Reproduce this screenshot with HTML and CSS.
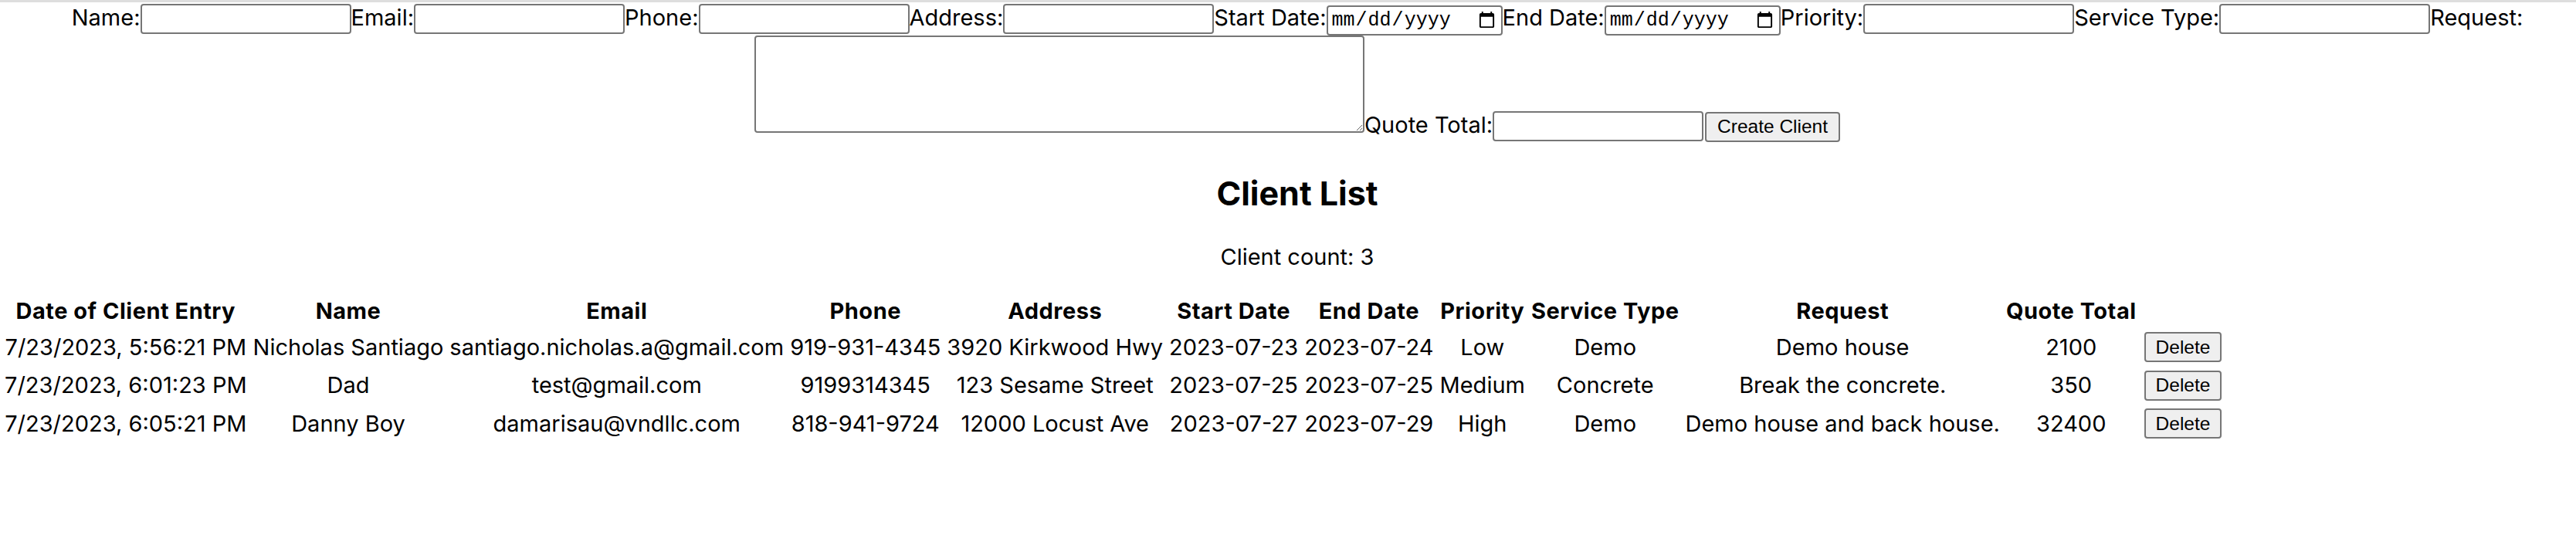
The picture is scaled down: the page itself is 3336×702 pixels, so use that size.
FILE: index.html
```html
<!DOCTYPE html>
<html lang="en">
<head>
<meta charset="utf-8">
<title>Client List</title>
<link rel="stylesheet" href="styles.css">
</head>
<body>
<div class="app">
  <form class="client-form"><label class="field-label">Name:</label><input class="text-input" type="text"><label class="field-label">Email:</label><input class="text-input" type="text"><label class="field-label">Phone:</label><input class="text-input" type="text"><label class="field-label">Address:</label><input class="text-input" type="text"><label class="field-label">Start Date:</label><input class="date-input" type="date"><label class="field-label">End Date:</label><input class="date-input" type="date"><label class="field-label">Priority:</label><input class="text-input" type="text"><label class="field-label">Service Type:</label><input class="text-input" type="text"><label class="field-label">Request:</label><textarea class="request-input"></textarea><label class="field-label">Quote Total:</label><input class="text-input" type="text"><button class="btn create-btn" type="button">Create Client</button></form>
  <h2 class="title">Client List</h2>
  <p class="count">Client count: 3</p>
  <table class="clients">
    <thead>
      <tr>
        <th>Date of Client Entry</th><th>Name</th><th>Email</th><th>Phone</th><th>Address</th><th>Start Date</th><th>End Date</th><th>Priority</th><th>Service Type</th><th>Request</th><th>Quote Total</th><th></th>
      </tr>
    </thead>
    <tbody>
      <tr>
        <td>7/23/2023, 5:56:21 PM</td><td>Nicholas Santiago</td><td>santiago.nicholas.a@gmail.com</td><td>919-931-4345</td><td>3920 Kirkwood Hwy</td><td>2023-07-23</td><td>2023-07-24</td><td>Low</td><td>Demo</td><td>Demo house</td><td>2100</td><td class="action"><button class="btn delete-btn" type="button">Delete</button></td>
      </tr>
      <tr>
        <td>7/23/2023, 6:01:23 PM</td><td>Dad</td><td>test@gmail.com</td><td>9199314345</td><td>123 Sesame Street</td><td>2023-07-25</td><td>2023-07-25</td><td>Medium</td><td>Concrete</td><td>Break the concrete.</td><td>350</td><td class="action"><button class="btn delete-btn" type="button">Delete</button></td>
      </tr>
      <tr>
        <td>7/23/2023, 6:05:21 PM</td><td>Danny Boy</td><td>damarisau@vndllc.com</td><td>818-941-9724</td><td>12000 Locust Ave</td><td>2023-07-27</td><td>2023-07-29</td><td>High</td><td>Demo</td><td>Demo house and back house.</td><td>32400</td><td class="action"><button class="btn delete-btn" type="button">Delete</button></td>
      </tr>
    </tbody>
  </table>
</div>
</body>
</html>
```

FILE: styles.css
```css
html, body {
  margin: 0;
  padding: 0;
  background: #ffffff;
}

body {
  border-top: 3px solid #dedede;
  font-family: Inter, "Noto Sans", sans-serif;
  font-size: 29px;
  color: #000000;
}

.app {
  text-align: center;
}

.client-form {
  margin: 0;
  padding: 2px 0 0 24px;
  line-height: 1.21;
}

.field-label {
  font-family: Inter, "Noto Sans", sans-serif;
  font-size: 29px;
  color: #000;
}

.text-input,
.date-input,
.request-input {
  box-sizing: border-box;
  margin: 0;
  border: 2px solid #767676;
  border-radius: 4px;
  background: #fff;
  vertical-align: baseline;
}

.text-input {
  width: 273px;
  height: 39px;
  padding: 2px 4px;
  font-family: "Liberation Sans", Arial, sans-serif;
  font-size: 25px;
}

.date-input {
  width: 228px;
  height: 39px;
  padding: 2px 4px;
  font-family: "Liberation Mono", monospace;
  font-size: 25px;
  color: #000;
}

.request-input {
  width: 790px;
  height: 126px;
  padding: 4px;
  font-family: "Liberation Mono", monospace;
  font-size: 25px;
}

.btn {
  box-sizing: border-box;
  margin: 0 0 0 2px;
  border: 2px solid #767676;
  border-radius: 4px;
  background: #efefef;
  color: #000;
  font-family: "Liberation Sans", Arial, sans-serif;
  font-size: 24.5px;
  padding: 2px 14px;
  height: 39px;
}

.create-btn {
  padding: 2px 14px;
}

.delete-btn {
  margin: 0;
  padding: 2px 13px;
}

.title {
  margin: 40px 0 0;
  padding-left: 24px;
  font-family: Inter, "Noto Sans", sans-serif;
  font-size: 43px;
  font-weight: 700;
  line-height: 1.21;
}

.count {
  margin: 39px 0 0;
  padding-left: 24px;
  font-size: 29px;
  line-height: 1.21;
}

.clients {
  margin: 28px 0 0;
  border-spacing: 4px;
  font-family: Inter, "Noto Sans", sans-serif;
  font-size: 29px;
}

.clients th,
.clients td {
  padding: 3px 2px;
  text-align: center;
  white-space: nowrap;
  line-height: 1.21;
}

.clients th {
  font-weight: 700;
  letter-spacing: 0.5px;
}

.clients td.action {
  padding-left: 4px;
}
```
